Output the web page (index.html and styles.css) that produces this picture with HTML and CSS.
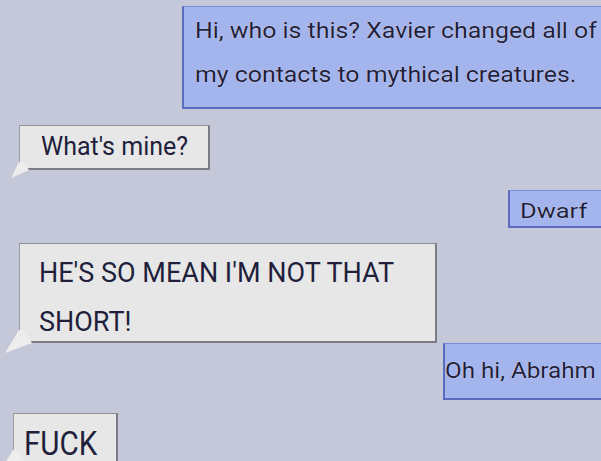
FILE: index.html
```html
<!DOCTYPE html>
<html lang="en">
<head>
<meta charset="utf-8">
<title>Chat</title>
<link rel="stylesheet" href="styles.css">
</head>
<body>
<main class="chat">
  <div class="bubble bubble--sent msg-intro">
    <span class="text">Hi, who is this? Xavier changed all of<br>my contacts to mythical creatures.</span>
  </div>
  <div class="bubble bubble--recv msg-mine">
    <span class="text">What's mine?</span>
  </div>
  <div class="bubble bubble--sent msg-dwarf">
    <span class="text">Dwarf</span>
  </div>
  <div class="bubble bubble--recv msg-mean">
    <span class="text">HE'S SO MEAN I'M NOT THAT SHORT!</span>
  </div>
  <div class="bubble bubble--sent msg-hi">
    <span class="text">Oh hi, Abrahm</span>
  </div>
  <div class="bubble bubble--recv msg-fuck">
    <span class="text">FUCK</span>
  </div>
</main>
</body>
</html>
```

FILE: styles.css
```css
html, body {
  margin: 0;
  padding: 0;
}

body {
  width: 601px;
  height: 461px;
  overflow: hidden;
  background: #c5c8d8;
  font-family: Roboto, "Noto Sans", sans-serif;
  color: #211f3c;
}

.chat {
  display: flex;
  flex-direction: column;
  align-items: flex-start;
  padding-top: 6px;
}

.bubble {
  position: relative;
  box-sizing: border-box;
  white-space: nowrap;
}

.text {
  display: block;
  transform-origin: 0 50%;
}

/* sent (blue) */
.bubble--sent {
  align-self: flex-end;
  margin-right: -30px;
  background: #a4b4ec;
  border-left: 2px solid #5a6cc0;
  border-top: 1px solid #7b8cd6;
  border-bottom: 2px solid #5a6cc0;
}

.bubble--sent .text {
  text-shadow: 0 0 1px rgba(255, 255, 255, 0.9);
}

/* received (grey) */
.bubble--recv {
  background: #e7e7e7;
  border-left: 1px solid #9b9ba3;
  border-top: 1px solid #8e8e95;
  border-right: 2px solid #7c7c82;
  border-bottom: 2px solid #7c7c82;
}

.bubble--recv::before {
  content: "";
  position: absolute;
  background: #ededed;
}

.msg-intro {
  width: 449px;
  height: 103px;
  padding: 1.5px 0 0 11px;
  font-size: 22px;
  line-height: 44px;
}
.msg-intro .text { transform: scaleX(1.13); }

.msg-mine {
  margin: 16px 0 0 19px;
  width: 191px;
  height: 45px;
  padding: 5.5px 0 0 21px;
  font-size: 25px;
  line-height: 30px;
}
.msg-mine::before {
  left: -9px;
  bottom: -10px;
  width: 20px;
  height: 16px;
  clip-path: polygon(8px 0, 12px 0, 18px 8px, 0 16px);
}

.msg-dwarf {
  margin-top: 20px;
  width: 123px;
  height: 38px;
  padding: 5.3px 0 0 10px;
  font-size: 21px;
  line-height: 30px;
}
.msg-dwarf .text { transform: scaleX(1.21); }

.msg-mean {
  margin: 15px 0 0 19px;
  width: 418px;
  height: 100px;
  padding: 5px 20px 0 19px;
  white-space: normal;
  font-size: 27px;
  line-height: 49px;
}
.msg-mean::before {
  left: -15px;
  bottom: -12px;
  width: 30px;
  height: 23px;
  clip-path: polygon(14px 0, 18px 0, 27px 13px, 0 23px);
}

.msg-hi {
  width: 188px;
  height: 57px;
  padding: 11.5px 0 0 0;
  font-size: 22px;
  line-height: 30px;
}
.msg-hi .text { transform: scaleX(1.1); }

.msg-fuck {
  margin: 13px 0 0 13px;
  width: 105px;
  height: 50px;
  padding: 11.5px 0 0 10px;
  font-size: 34px;
  line-height: 34px;
}
.msg-fuck .text { transform: scaleX(0.87); }
.msg-fuck::before {
  left: -15px;
  bottom: -12px;
  width: 30px;
  height: 23px;
  clip-path: polygon(14px 0, 18px 0, 27px 13px, 0 23px);
}
```
